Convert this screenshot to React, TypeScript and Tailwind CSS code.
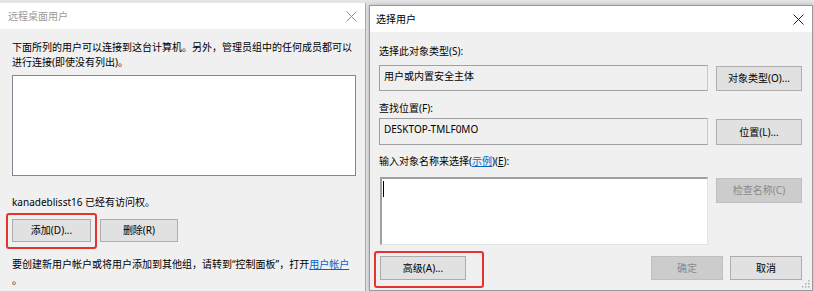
const font = { fontFamily: '"Noto Sans", "Noto Sans CJK SC", sans-serif' };

const CloseIcon = ({ color }: { color: string }) => (
  <svg width="11" height="11" viewBox="0 0 11 11">
    <path d="M0.5 0.5 L10.5 10.5 M10.5 0.5 L0.5 10.5" stroke={color} strokeWidth="1" />
  </svg>
);

const Btn = ({
  children,
  className = "",
  disabled = false,
}: {
  children: React.ReactNode;
  className?: string;
  disabled?: boolean;
}) => (
  <div
    className={
      "flex items-center justify-center border text-[10px] " +
      (disabled
        ? "bg-[#cccccc] border-[#bfbfbf] text-[#8a8a8a] "
        : "bg-[#e1e1e1] border-[#adadad] text-black ") +
      className
    }
  >
    {children}
  </div>
);

const App = () => {
  return (
    <div
      className="w-[814px] h-[291px] overflow-hidden bg-[#e4e4e4] flex items-start text-[10px] text-black"
      style={font}
    >
      {/* 远程桌面用户 */}
      <div className="mt-[3px] w-[366px] h-[288px] flex flex-col bg-[#f0f0f0] border-r border-[#aaaaaa]">
        <div className="h-[26px] bg-white flex items-center justify-between pl-[8px] pr-[8px] text-[#9a9a9a]">
          <span>远程桌面用户</span>
          <CloseIcon color="#8a8a8a" />
        </div>
        <div className="flex flex-col pl-[12px] pr-[9px] pt-[11px]">
          <p className="leading-[15px] whitespace-nowrap">
            下面所列的用户可以连接到这台计算机。另外，管理员组中的任何成员都可以
            <br />
            进行连接(即使没有列出)。
          </p>
          <div className="mt-[5px] h-[101px] w-[344px] bg-white border border-[#828790]" />
          <p className="mt-[19px] leading-[15px]">kanadeblisst16 已经有访问权。</p>
          <div className="mt-[9px] flex gap-[9px]">
            <div className="relative">
              <Btn className="w-[79px] h-[23px]">添加(D)...</Btn>
              <div className="absolute -left-[6px] -right-[6px] -top-[6px] -bottom-[7px] border-2 border-[#e8322f] rounded-[3px]" />
            </div>
            <Btn className="w-[78px] h-[23px]">删除(R)</Btn>
          </div>
          <p className="mt-[14px] leading-[16px] whitespace-nowrap">
            要创建新用户帐户或将用户添加到其他组，请转到“控制面板”，打开
            <span className="text-[#0066cc] underline">用户帐户</span>
            <br />。
          </p>
        </div>
      </div>

      {/* 选择用户 */}
      <div className="ml-[3px] mt-[5px] w-[444px] h-[286px] flex flex-col bg-[#f0f0f0] border border-[#9a9a9a] shadow-[0_0_4px_rgba(0,0,0,0.25)]">
        <div className="h-[26px] shrink-0 bg-white flex items-center justify-between pl-[6px] pr-[8px]">
          <span>选择用户</span>
          <CloseIcon color="#222222" />
        </div>
        <div className="relative flex-1 flex flex-col pl-[9px] pr-[10px]">
          <p className="mt-[12px] leading-[15px]">选择此对象类型(S):</p>
          <div className="mt-[6px] flex items-start justify-between">
            <div className="w-[329px] h-[26px] bg-[#f0f0f0] border border-[#a0a0a0] border-r-[#c8c8c8] px-[4px] pt-[3px] leading-[15px]">
              用户或内置安全主体
            </div>
            <Btn className="mt-[1px] w-[86px] h-[25px]">对象类型(O)...</Btn>
          </div>
          <p className="mt-[10px] leading-[15px]">查找位置(F):</p>
          <div className="mt-[2px] flex items-start justify-between">
            <div className="w-[329px] h-[27px] bg-[#f0f0f0] border border-[#a0a0a0] border-r-[#c8c8c8] px-[4px] pt-[3px] leading-[15px]">
              DESKTOP-TMLF0MO
            </div>
            <Btn className="mt-[1px] w-[86px] h-[26px]">位置(L)...</Btn>
          </div>
          <p className="mt-[9px] leading-[15px]">
            输入对象名称来选择(<span className="text-[#0066cc] underline">示例</span>)(<span className="underline">E</span>):
          </p>
          <div className="mt-[8px] flex items-start justify-between">
            <div className="ml-[1px] w-[328px] h-[68px] bg-white border-t-2 border-l-2 border-[#a0a0a0] border-r border-b border-r-[#e3e3e3] border-b-[#e3e3e3] pl-[1px] pt-[2px]">
              <div className="w-[1px] h-[16px] bg-black" />
            </div>
            <Btn disabled className="mt-[1px] w-[86px] h-[25px]">检查名称(C)</Btn>
          </div>
          <div className="mt-[11px] flex items-center">
            <div className="relative ml-[1px]">
              <Btn className="w-[86px] h-[24px]">高级(A)...</Btn>
              <div className="absolute -left-[6px] -right-[18px] -top-[5px] -bottom-[8px] border-2 border-[#e8322f] rounded-[3px]" />
            </div>
            <div className="ml-auto flex gap-[7px]">
              <Btn disabled className="w-[72px] h-[24px]">确定</Btn>
              <Btn className="w-[72px] h-[24px]">取消</Btn>
            </div>
          </div>
          <svg className="absolute right-[2px] bottom-[2px]" width="8" height="8" viewBox="0 0 8 8">
            <rect x="6" y="0" width="1.5" height="1.5" fill="#b0b0b0" />
            <rect x="3" y="3" width="1.5" height="1.5" fill="#b0b0b0" />
            <rect x="6" y="3" width="1.5" height="1.5" fill="#b0b0b0" />
            <rect x="0" y="6" width="1.5" height="1.5" fill="#b0b0b0" />
            <rect x="3" y="6" width="1.5" height="1.5" fill="#b0b0b0" />
            <rect x="6" y="6" width="1.5" height="1.5" fill="#b0b0b0" />
          </svg>
        </div>
      </div>
    </div>
  );
};

export default App;
